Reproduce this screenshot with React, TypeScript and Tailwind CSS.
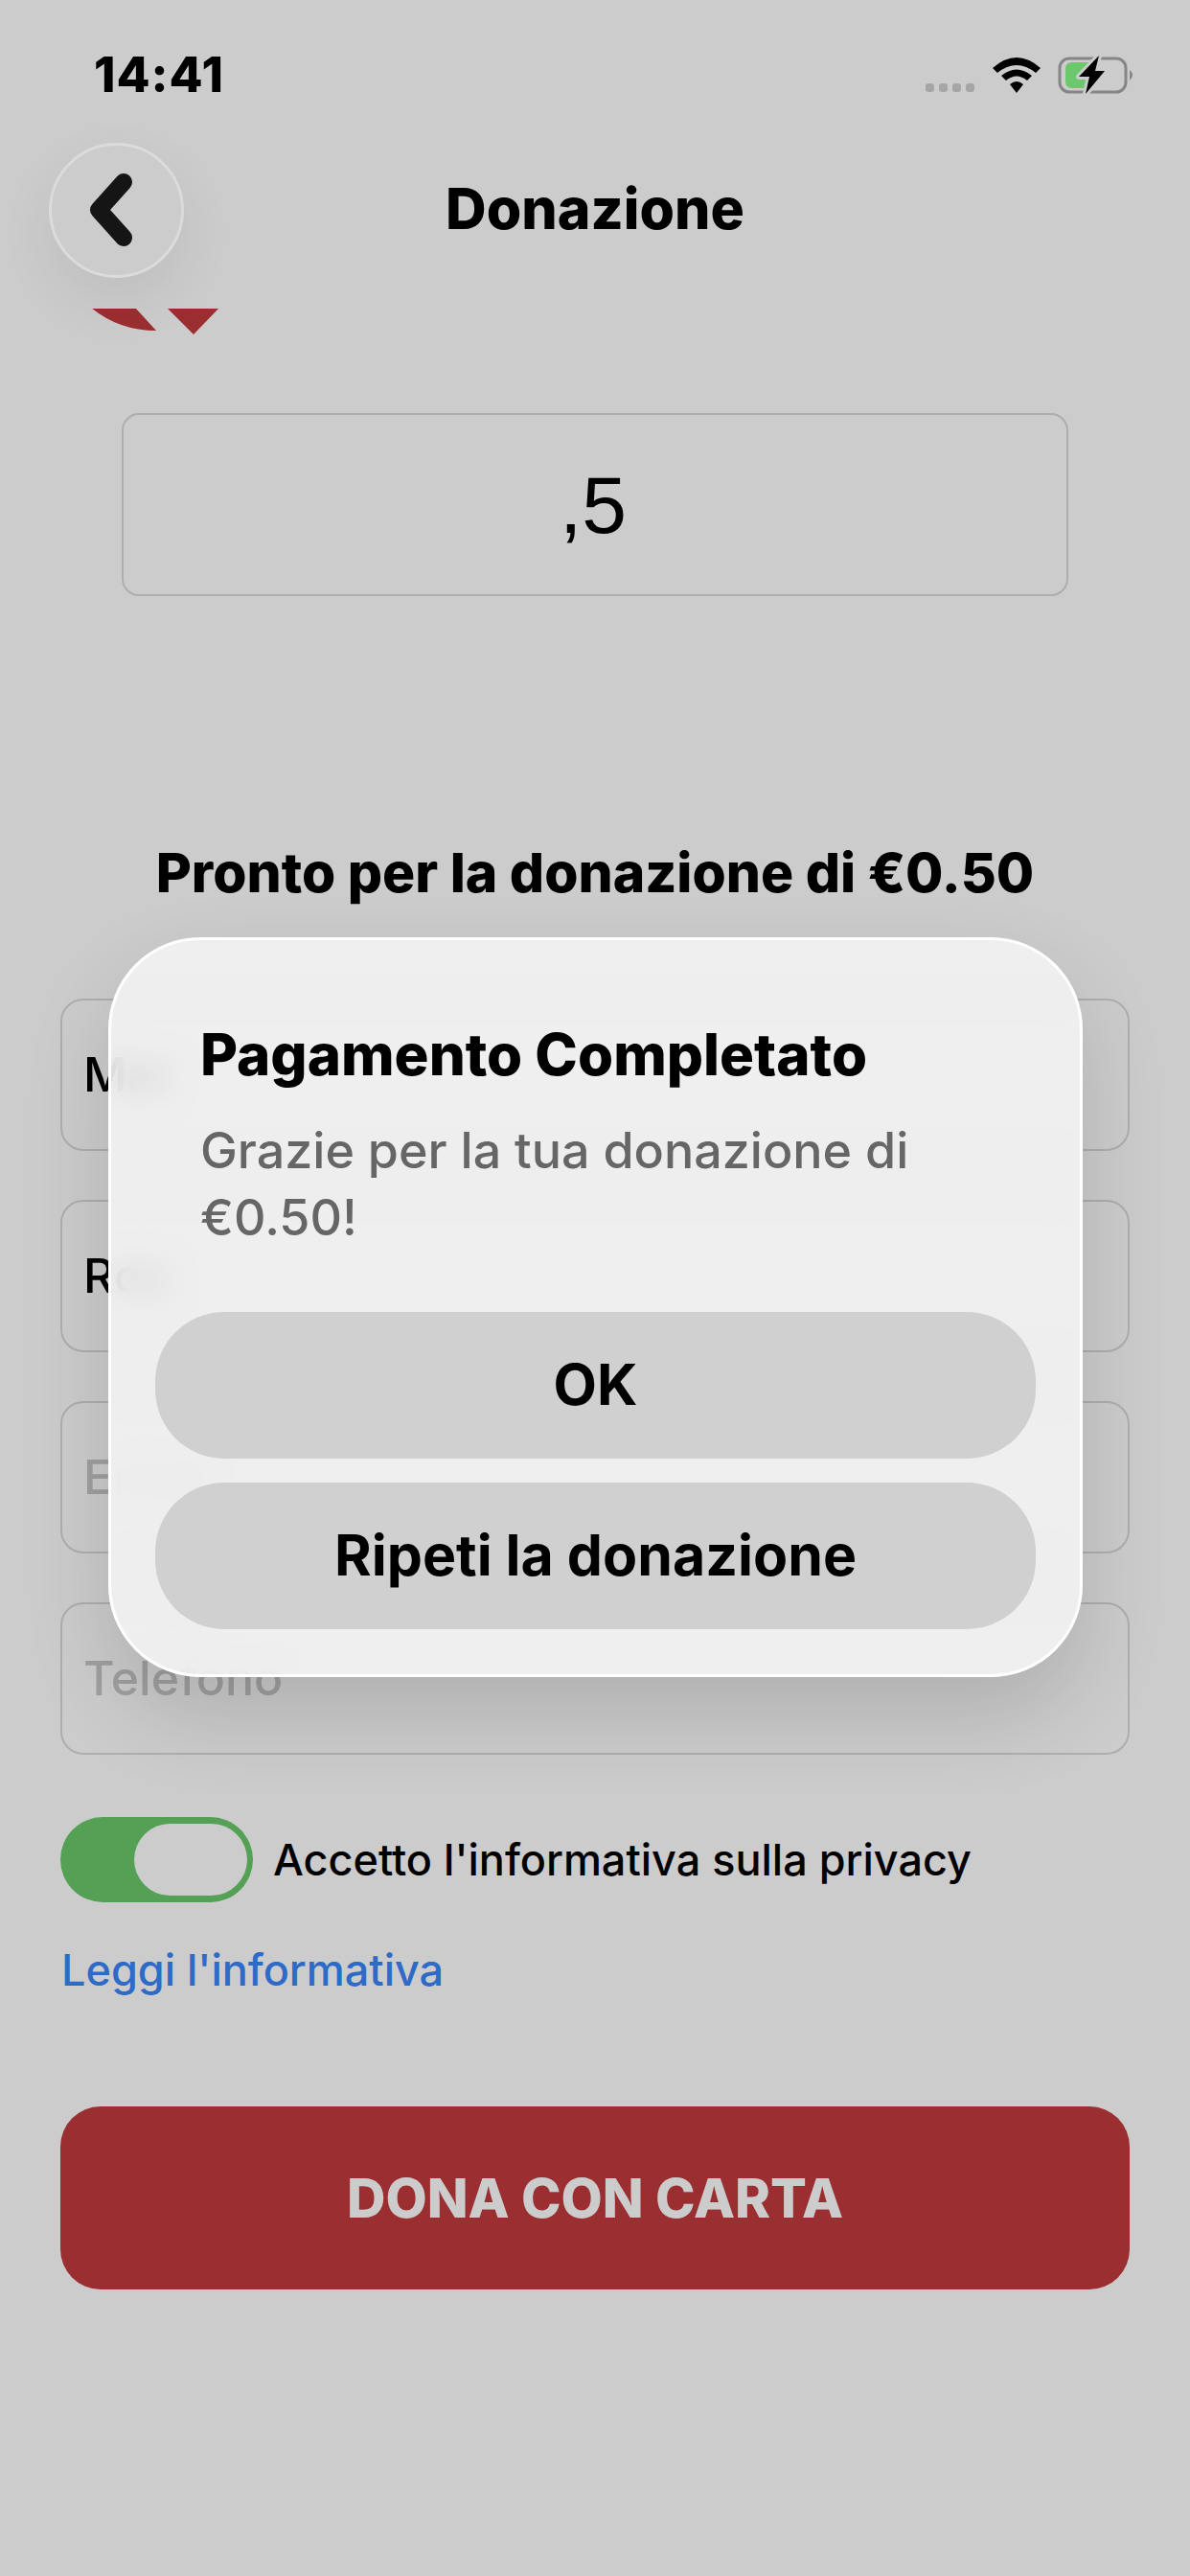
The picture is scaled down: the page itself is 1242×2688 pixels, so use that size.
import React from "react";

function FieldBox({ children, muted }: { children: React.ReactNode; muted?: boolean }) {
  return (
    <div
      className={`flex h-[159px] items-center rounded-[24px] border-2 border-[#dadada] pl-[22px] text-[50px] font-medium ${
        muted ? "text-[#c8c8c8]" : "text-black"
      }`}
    >
      {children}
    </div>
  );
}

function DialogButton({ children }: { children: React.ReactNode }) {
  return (
    <div className="flex h-[153px] items-center justify-center rounded-[72px] bg-[#d0d0d0] text-[59px] font-bold text-black">
      {children}
    </div>
  );
}

export default function App() {
  return (
    <div className="relative h-[2688px] w-[1242px] overflow-hidden bg-white font-['Inter',sans-serif]">
      <div className="flex h-[322px] flex-col">
        <div className="flex h-[110px] items-start justify-between pl-[98px] pr-[58px] pt-[50px]">
          <span className="text-[51px] font-extrabold leading-[56px] tracking-[1px] text-black">14:41</span>
          <div className="flex items-start">
            <div className="mr-[18px] mt-[37px] flex gap-[5px]">
              <span className="h-[9px] w-[9px] rounded-[3px] bg-[#d0d0d0]" />
              <span className="h-[9px] w-[9px] rounded-[3px] bg-[#d0d0d0]" />
              <span className="h-[9px] w-[9px] rounded-[3px] bg-[#d0d0d0]" />
              <span className="h-[9px] w-[9px] rounded-[3px] bg-[#d0d0d0]" />
            </div>
            <svg width="52" height="40" viewBox="0 0 52 40" className="mr-[17px] mt-[8px]">
              <path d="M1 13 Q26 -9 51 13 L46 18 Q26 2 6 18 Z" fill="#000" />
              <path d="M10 21 Q26 8 42 21 L37 26 Q26 17 15 26 Z" fill="#000" />
              <path d="M19 30 Q26 24 33 30 L26 39 Z" fill="#000" />
            </svg>
            <svg width="80" height="42" viewBox="0 0 80 42" className="mt-[8px]">
              <rect x="2" y="3" width="69" height="35" rx="10" fill="none" stroke="#a8a8a8" strokeWidth="3" />
              <path d="M75 15 Q81 20 75 26 Z" fill="#a8a8a8" />
              <path d="M15 7 H36 V34 H15 Q8 34 8 27 V14 Q8 7 15 7 Z" fill="#87fb87" />
              <path d="M43 0 L22 22 H33 L29 40 L49 16 H39 Z" fill="#000" stroke="#ffffff" strokeWidth="6" paintOrder="stroke" strokeLinejoin="round" />
            </svg>
          </div>
        </div>
        <div className="relative flex h-[212px] items-start justify-center pt-[72px]">
          <span className="text-[59px] font-extrabold leading-[72px] text-black">Donazione</span>
        </div>
      </div>

      <div className="h-[109px] overflow-hidden">
        <svg width="240" height="40" viewBox="0 0 240 40" className="block">
          <path d="M95 0 H141 L163 24 Q124 24 95 0 Z" fill="#c23a3d" transform="translate(0,-1)" />
          <path d="M174 0 H229 L202 28 Z" fill="#c23a3d" transform="translate(0,-1)" />
        </svg>
      </div>

      <div className="mx-[127px] flex h-[191px] items-center justify-center rounded-[18px] border-2 border-[#dadada] pr-[4px] font-['Liberation_Sans',sans-serif] text-[84px] text-black">
        ,5
      </div>

      <div className="mt-[256px] text-center text-[57px] font-extrabold leading-[66px] text-black">
        Pronto per la donazione di €0.50
      </div>

      <div className="mx-[63px] mt-[98px] flex flex-col gap-[51px]">
        <FieldBox>Mar</FieldBox>
        <FieldBox>Ros</FieldBox>
        <FieldBox muted>Email</FieldBox>
        <FieldBox muted>Telefono</FieldBox>
      </div>

      <div className="ml-[63px] mt-[65px] flex items-center gap-[21px]">
        <div className="flex h-[89px] w-[201px] items-center justify-end rounded-full bg-[#69c86b] pr-[6px]">
          <div className="h-[75px] w-[118px] rounded-full bg-white" />
        </div>
        <span className="text-[45px] font-medium text-black">Accetto l'informativa sulla privacy</span>
      </div>

      <div className="ml-[64px] mt-[41px] text-[45px] font-medium leading-[60px] text-[#3a86fa]">Leggi l'informativa</div>

      <div className="mx-[63px] mt-[112px] flex h-[191px] items-center justify-center rounded-[42px] bg-[#c23a3d] text-[56px] font-extrabold text-white">
        DONA CON CARTA
      </div>

      <div className="absolute inset-0 bg-black/20" />

      <div className="absolute left-[51px] top-[149px] h-[141px] w-[141px] rounded-full border-[3px] border-white/30 shadow-[0_24px_60px_rgba(0,0,0,0.07)]">
        <svg width="135" height="135" viewBox="0 0 135 135" className="block">
          <path d="M75 38 L49 67 L75 96" fill="none" stroke="#151515" strokeWidth="18" strokeLinecap="round" strokeLinejoin="round" />
        </svg>
      </div>

      <div className="absolute left-[113px] top-[978px] flex h-[772px] w-[1017px] flex-col rounded-[96px] border-[3px] border-white bg-[#f4f4f4]/85 px-[46px] shadow-[0_40px_90px_rgba(0,0,0,0.14)] backdrop-blur-[16px]">
        <div className="ml-[47px] mt-[84px] text-[60px] font-extrabold leading-[70px] text-black">Pagamento Completato</div>
        <div className="ml-[47px] mt-[31px] w-[800px] text-[52px] font-medium leading-[70px] text-[#666666]">
          Grazie per la tua donazione di €0.50!
        </div>
        <div className="mt-[63px] flex flex-col gap-[25px]">
          <DialogButton>OK</DialogButton>
          <DialogButton>Ripeti la donazione</DialogButton>
        </div>
      </div>
    </div>
  );
}
